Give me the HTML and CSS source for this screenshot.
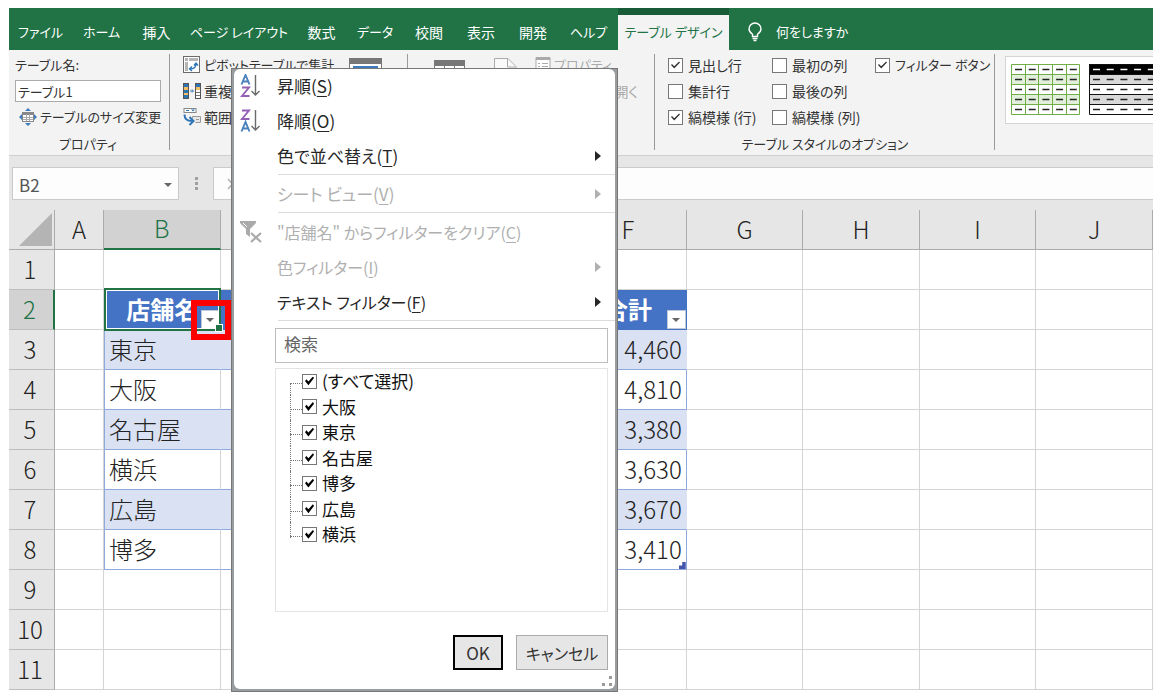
FILE: index.html
```html
<!DOCTYPE html>
<html lang="ja">
<head>
<meta charset="utf-8">
<title>テーブル デザイン</title>
<link rel="stylesheet" href="styles.css">
</head>
<body>
<div class="app">
  <nav class="tabs">
    <div class="tab-list">
      <button class="tab kana">ファイル</button>
      <button class="tab kana">ホーム</button>
      <button class="tab">挿入</button>
      <button class="tab kana">ページ レイアウト</button>
      <button class="tab">数式</button>
      <button class="tab kana">データ</button>
      <button class="tab">校閲</button>
      <button class="tab">表示</button>
      <button class="tab">開発</button>
      <button class="tab kana">ヘルプ</button>
      <button class="tab kana tab-active">テーブル デザイン</button>
    </div>
    <button class="tell-me kana">
      <svg width="16" height="20" viewBox="0 0 16 20" fill="none" stroke="#fff" stroke-width="1.4"><path d="M5.5 14.5v-2.2C3.5 10.800 2 9.200 2 6.900a6 5.900 0 0 1 12 0c0 2.300-1.500 3.900-3.500 5.400v2.200z"/><path d="M5.500 16.500h5M6.500 18.500h3"/></svg>
      <span>何をしますか</span>
    </button>
  </nav>

  <section class="ribbon">
    <div class="group group-props">
      <div class="rows">
        <label class="row kana" for="tname">テーブル名:</label>
        <div class="row kana"><input class="table-name" id="tname" type="text" value="テーブル1"></div>
        <button class="row tool kana tool-indent">
          <svg width="18" height="18" viewBox="0 0 18 18"><path d="M9 0l3 3H6zM9 18l3-3H6zM0 9l3-3v6zM18 9l-3-3v6z" fill="#3f7cbf"/><rect x="3.500" y="4.500" width="11" height="9" fill="#fff" stroke="#888"/><path d="M4 5h10v2H4z" fill="#888"/><path d="M4 9.500h10M4 11.500h10M7.500 6v7M10.500 6v7" stroke="#aaa"/></svg>
          <span>テーブルのサイズ変更</span>
        </button>
      </div>
      <div class="group-label kana">プロパティ</div>
    </div>
    <div class="group group-tools">
      <div class="rows">
        <button class="row tool kana">
          <svg width="18" height="18" viewBox="0 0 18 18"><rect x=".5" y=".5" width="16" height="16" fill="#fff" stroke="#6b6b6b"/><path d="M2 2h3v3H2zM6 2h9v3H6zM2 6h3v9H2z" fill="#b5b5b5"/><path d="M7 13c4 0 6-2 6-5M11 9.500L13 7l2 2.500M9 10.500L6.500 13 9 15" fill="none" stroke="#2e75b6" stroke-width="1.400"/></svg>
          <span>ピボットテーブルで集計</span>
        </button>
        <button class="row tool">
          <svg width="18" height="16" viewBox="0 0 18 16"><rect x=".5" y=".5" width="5" height="15" fill="#2e75b6" stroke="#555"/><path d="M1 4h4v3H1zM1 10h4v2H1z" fill="#f2c063"/><path d="M7 8h3M9 6.500L10.500 8 9 9.500" stroke="#2e75b6" fill="none"/><rect x="12.500" y=".5" width="5" height="15" fill="#fff" stroke="#555"/><path d="M13 1h4v3h-4z" fill="#2e75b6"/><path d="M13 4h4v3h-4z" fill="#f2c063"/><path d="M13 9.500h4M13 12.500h4" stroke="#777"/></svg>
          <span>重複</span>
        </button>
        <button class="row tool">
          <svg width="18" height="18" viewBox="0 0 18 18"><rect x="1" y=".5" width="12" height="4" fill="#fff" stroke="#888"/><path d="M3 2.500h3" stroke="#2e75b6"/><path d="M8 1.500h4l-2 2z" fill="#2e75b6"/><path d="M9.500 10.500v-2h8v6h-5" fill="#e8e8e8" stroke="#999"/><path d="M13 11.500h3" stroke="#999"/><path d="M1.500 6.500c0 4 2 6.500 7.500 6.500M6.500 9l4 4-4 4" fill="none" stroke="#2e75b6" stroke-width="2"/></svg>
          <span>範囲</span>
        </button>
      </div>
      <svg class="big-icon" width="34" height="32" viewBox="0 0 34 32"><rect x=".5" y=".5" width="32" height="30" fill="#fff" stroke="#777"/><path d="M0 0h33v6H0z" fill="#777"/><path d="M4 8h25v10H4z" fill="#3f7cbf"/></svg>
    </div>
    <div class="group group-ext">
      <svg class="big-icon" width="32" height="32" viewBox="0 0 32 32"><rect x=".5" y="2.500" width="30" height="28" fill="#fff" stroke="#777"/><path d="M0 2h31v6H0z" fill="#777"/><path d="M10.500 8v22M20.500 8v22" stroke="#777"/></svg>
      <svg class="big-icon" width="24" height="32" viewBox="0 0 24 32" fill="#f9f9f9" stroke="#aaa"><path d="M.5 30V.5H14l8 8V30z"/><path d="M13.500 1v8h8"/></svg>
      <div class="rows ext-rows">
        <button class="row tool kana" disabled>
          <svg width="16" height="16" viewBox="0 0 16 16"><rect x="1" y="1" width="14" height="14" fill="#fff" stroke="#aaa"/><path d="M1 0h14v3H1z" fill="#aaa"/><path d="M3 6.500h2M7 6.500h6M3 9.500h2M7 9.500h6M3 12.500h2M7 12.500h6" stroke="#aaa"/></svg>
          <span>プロパティ</span>
        </button>
        <button class="row tool row-end" disabled>開く</button>
      </div>
    </div>
    <div class="group group-style">
      <div class="checks">
        <label class="row check"><input type="checkbox" checked>見出し行</label>
        <label class="row check"><input type="checkbox">最初の列</label>
        <label class="row check kana"><input type="checkbox" checked>フィルター ボタン</label>
        <label class="row check"><input type="checkbox">集計行</label>
        <label class="row check"><input type="checkbox">最後の列</label>
        <span></span>
        <label class="row check"><input type="checkbox" checked>縞模様 (行)</label>
        <label class="row check"><input type="checkbox">縞模様 (列)</label>
      </div>
      <div class="group-label kana">テーブル スタイルのオプション</div>
    </div>
    <div class="gallery">
      <svg width="70" height="52" viewBox="0 0 70 52"><path d="M0 0h69v51H0z" fill="#fff"/><path d="M0 10.500h69v10H0zM0 30.500h69v10H0z" fill="#e2efda"/><path d="M.5.5h68v50H.5zM0 10.500h69M0 20.500h69M0 30.500h69M0 40.500h69M14.500 0v51M27.500 0v51M41.500 0v51M55.500 0v51" fill="none" stroke="#70ad47"/><path d="M4 5.500h62M4 15.500h62M4 25.500h62M4 35.500h62M4 45.500h62" stroke="#222" stroke-width="1.400" stroke-dasharray="7 6.700"/></svg>
      <svg width="70" height="52" viewBox="0 0 70 52"><path d="M0 0h69v51H0z" fill="#fff"/><path d="M0 10.500h69v10H0zM0 30.500h69v10H0z" fill="#d9d9d9"/><path d="M0 0h69v10H0z"/><path d="M.5.5h68v50H.5zM0 10.500h69M0 20.500h69M0 30.500h69M0 40.500h69" fill="none" stroke="#111"/><path d="M4 5.500h62" stroke="#fff" stroke-width="1.400" stroke-dasharray="7 6.700"/><path d="M4 15.500h62M4 25.500h62M4 35.500h62M4 45.500h62" stroke="#222" stroke-width="1.400" stroke-dasharray="7 6.700"/></svg>
    </div>
  </section>

  <div class="formula-bar">
    <button class="name-box"><span>B2</span><i class="caret"></i></button>
    <span class="dots"><i></i><i></i><i></i></span>
    <div class="fx-box"><svg width="12" height="12" viewBox="0 0 12 12"><path d="M1 1l9 10M10 1L1 11" stroke="#b0b0b0" stroke-width="1.500"/></svg></div>
  </div>

  <table class="sheet">
    <colgroup><col class="col-num"><col class="col-a"><col><col><col><col><col><col><col><col><col></colgroup>
    <thead>
      <tr><th class="corner"><svg width="33" height="33" viewBox="0 0 33 33"><path d="M33 0v33H0z" fill="#b4b4b4"/></svg></th><th>A</th><th class="on">B</th><th></th><th></th><th></th><th>F</th><th>G</th><th>H</th><th>I</th><th>J</th></tr>
    </thead>
    <tbody>
      <tr><th>1</th><td></td><td></td><td></td><td></td><td></td><td></td><td></td><td></td><td></td><td></td></tr>
      <tr class="head"><th class="on">2</th><td></td><td class="t first active">店舗名<button class="filter" aria-label="フィルター"><i class="caret"></i></button><span class="selection"></span><span class="marker"></span></td><td class="t"></td><td class="t"></td><td class="t"></td><td class="t last">合計<button class="filter" aria-label="フィルター"><i class="caret"></i></button></td><td></td><td></td><td></td><td></td></tr>
      <tr class="band"><th>3</th><td></td><td class="t first">東京</td><td class="t"></td><td class="t"></td><td class="t"></td><td class="t last">4,460</td><td></td><td></td><td></td><td></td></tr>
      <tr><th>4</th><td></td><td class="t first">大阪</td><td class="t"></td><td class="t"></td><td class="t"></td><td class="t last">4,810</td><td></td><td></td><td></td><td></td></tr>
      <tr class="band"><th>5</th><td></td><td class="t first">名古屋</td><td class="t"></td><td class="t"></td><td class="t"></td><td class="t last">3,380</td><td></td><td></td><td></td><td></td></tr>
      <tr><th>6</th><td></td><td class="t first">横浜</td><td class="t"></td><td class="t"></td><td class="t"></td><td class="t last">3,630</td><td></td><td></td><td></td><td></td></tr>
      <tr class="band"><th>7</th><td></td><td class="t first">広島</td><td class="t"></td><td class="t"></td><td class="t"></td><td class="t last">3,670</td><td></td><td></td><td></td><td></td></tr>
      <tr><th>8</th><td></td><td class="t first">博多</td><td class="t"></td><td class="t"></td><td class="t"></td><td class="t last">3,410<span class="resize"></span></td><td></td><td></td><td></td><td></td></tr>
      <tr><th>9</th><td></td><td></td><td></td><td></td><td></td><td></td><td></td><td></td><td></td><td></td></tr>
      <tr><th>10</th><td></td><td></td><td></td><td></td><td></td><td></td><td></td><td></td><td></td><td></td></tr>
      <tr><th>11</th><td></td><td></td><td></td><td></td><td></td><td></td><td></td><td></td><td></td><td></td></tr>
    </tbody>
  </table>
</div>

<div class="popup">
  <div class="popup-body">
    <button class="item"><svg width="22" height="24" viewBox="0 0 22 24" fill="none" stroke-width="1.900"><path d="M1.500 10.500L5.500 1l4 9.500M3 7.500h5" stroke="#4a80bd"/><path d="M2 13.500h7L2 22h7.500" stroke="#9460b4"/><path d="M15.500 1v20M11.500 17l4 4 4-4" stroke="#6a6a6a" stroke-width="1.400"/></svg><span>昇順(<u>S</u>)</span></button>
    <button class="item"><svg width="22" height="24" viewBox="0 0 22 24" fill="none" stroke-width="1.900"><path d="M2 1.500h7L2 10h7.500" stroke="#9460b4"/><path d="M1.500 22.500l4-9.500 4 9.500M3 19.500h5" stroke="#4a80bd"/><path d="M15.500 1v20M11.500 17l4 4 4-4" stroke="#6a6a6a" stroke-width="1.400"/></svg><span>降順(<u>O</u>)</span></button>
    <button class="item"><span class="label">色で並べ替え(<u>T</u>)</span><i class="arrow"></i></button>
    <hr>
    <button class="item" disabled><span class="label">シート ビュー(<u>V</u>)</span><i class="arrow"></i></button>
    <hr>
    <button class="item item-kana" disabled><svg width="22" height="24" viewBox="0 0 22 24"><path d="M0 1h16v2l-6 6v8l-4-3V9L0 3z" fill="#aaa"/><path d="M3 3l4 4" stroke="#fff"/><path d="M11 13l10 9M21 13l-10 9" stroke="#aaa" stroke-width="2.200"/></svg><span>"店舗名" からフィルターをクリア(<u>C</u>)</span></button>
    <button class="item item-kana" disabled><span class="label">色フィルター(<u>I</u>)</span><i class="arrow"></i></button>
    <button class="item item-kana"><span class="label">テキスト フィルター(<u>F</u>)</span><i class="arrow"></i></button>
    <hr>
    <input class="search" type="text" placeholder="検索" aria-label="検索">
    <div class="list">
      <ul class="tree">
        <li><label><input type="checkbox" checked>(すべて選択)</label></li>
        <li><label><input type="checkbox" checked>大阪</label></li>
        <li><label><input type="checkbox" checked>東京</label></li>
        <li><label><input type="checkbox" checked>名古屋</label></li>
        <li><label><input type="checkbox" checked>博多</label></li>
        <li><label><input type="checkbox" checked>広島</label></li>
        <li><label><input type="checkbox" checked>横浜</label></li>
      </ul>
    </div>
    <div class="actions">
      <button class="ok">OK</button>
      <button class="cancel item-kana">キャンセル</button>
    </div>
    <svg class="grip" width="12" height="12" viewBox="0 0 12 12"><path d="M8 1h3v3H8zM1 8h3v3H1zM8 8h3v3H8z" fill="#9a9a9a"/></svg>
  </div>
</div>
</body>
</html>
```
FILE: styles.css
```css
* { box-sizing: border-box; }

body {
  margin: 0;
  padding: 8px 9px;
  background: #fff;
  color: #333;
  font-family: "Noto Sans CJK JP", sans-serif;
  font-size: 14px;
  line-height: 20px;
  font-feature-settings: "palt";
}

button, input {
  margin: 0;
  padding: 0;
  border: 0;
  background: none;
  color: inherit;
  font: inherit;
  font-feature-settings: inherit;
  white-space: nowrap;
}

svg { flex: none; display: block; }

.kana { font-size: 13px; }

/* Tabs */
.tabs {
  display: flex;
  height: 42px;
  background: #217346;
  color: #fff;
}
.tab-list {
  display: grid;
  grid-template-columns: 63px 59px 51px 114px 51px 56px 52px 52px 52px 59px 111px;
}
.tab { padding-top: 5px; }
.tab-active {
  padding-top: 0;
  padding-bottom: 2px;
  border-top: 7px solid #185c37;
  background: #f3f3f3;
  color: #217346;
}
.tell-me {
  display: flex;
  align-items: center;
  gap: 13px;
  padding: 5px 0 0 18px;
}

/* Ribbon */
.ribbon {
  display: flex;
  height: 106px;
  padding-top: 2px;
  overflow: hidden;
  border-bottom: 1px solid #d0d0d0;
  background: #f3f3f3;
}
.group {
  display: flex;
  flex: none;
  position: relative;
}
.group::after {
  content: "";
  position: absolute;
  top: 2px;
  right: 0;
  width: 1px;
  height: 96px;
  background: #9a9a9a;
}
.row {
  display: flex;
  align-items: center;
  height: 26px;
  white-space: nowrap;
}
.row-end { justify-content: flex-end; }
.tool { gap: 3px; }
.tool:disabled { color: #aaa; }
.group-label {
  padding-top: 4px;
  text-align: center;
}
.group-props {
  flex-direction: column;
  width: 161px;
  padding: 0 9px 0 6px;
}
.table-name {
  width: 100%;
  height: 22px;
  padding: 0 2px;
  border: 1px solid #ababab;
  background: #fff;
}
.tool-indent { padding-left: 4px; }
.group-tools {
  gap: 25px;
  width: 238px;
  padding-left: 13px;
}
.group-tools .rows { width: 141px; }
.big-icon { margin-top: 6px; }
.group-ext {
  width: 247px;
  padding-left: 26px;
  gap: 28px;
}
.ext-rows {
  flex: 1;
  margin-right: 17px;
  margin-left: -11px;
}
.ext-rows .row { width: 100%; }
.group-style {
  flex-direction: column;
  width: 340px;
  padding: 0 13px;
}
.checks {
  display: grid;
  grid-template-columns: 104px 103px 1fr;
}
.check { gap: 5px; }
.check input {
  flex: none;
  width: 15px;
  height: 15px;
  appearance: none;
  border: 1px solid #777;
  background: #fff;
}
.check input:checked::before {
  content: "";
  display: block;
  width: 9px;
  height: 9px;
  margin: 2px;
  background: #333;
  clip-path: polygon(0 50%, 11% 38%, 36% 65%, 90% 10%, 100% 22%, 36% 88%);
}
.gallery {
  display: flex;
  flex: none;
  gap: 8px;
  height: 68px;
  margin: 4px 0 0 10px;
  padding: 7px 5px;
  border: 1px solid #d4d4d4;
  background: #fff;
}

/* Formula bar */
.formula-bar {
  display: flex;
  height: 54px;
  padding: 11px 0 10px 3px;
  background: #e6e6e6;
}
.caret {
  width: 0;
  border: 4px solid transparent;
  border-top-color: #666;
  border-bottom: 0;
}
.name-box {
  display: flex;
  align-items: center;
  justify-content: space-between;
  width: 167px;
  padding: 2px 6px 0;
  border: 1px solid #cbcbcb;
  background: #fdfdfd;
  color: #555;
  font-size: 17px;
}
.dots {
  display: grid;
  align-content: center;
  gap: 2px;
  width: 34px;
  justify-items: center;
}
.dots i {
  width: 3px;
  height: 3px;
  background: #a0a0a0;
}
.fx-box {
  display: flex;
  flex: 1;
  align-items: center;
  padding-left: 13px;
  border: 1px solid #cbcbcb;
  border-right: 0;
  background: #fdfdfd;
}

/* Sheet */
.sheet {
  width: 100%;
  table-layout: fixed;
  border-collapse: separate;
  border-spacing: 0;
  color: #222;
  font-size: 24px;
  font-weight: 300;
  line-height: 36px;
}
.col-num { width: 46px; }
.col-a { width: 49px; }
.sheet th, .sheet td {
  position: relative;
  height: 40px;
  padding: 0 0 2px;
  border-right: 1px solid #d4d4d4;
  border-bottom: 1px solid #d4d4d4;
}
.sheet th {
  border-color: #ababab;
  background: #e6e6e6;
  font-weight: 300;
}
.sheet tbody th { border-bottom-color: #bdbdbd; padding-right: 3px; }
.sheet .corner svg { margin: 2px 3px 0 10px; }
.sheet .on {
  background: #d2d2d2;
  color: #217346;
}
.sheet thead .on { border-bottom: 2px solid #217346; }
.sheet tbody .on { border-right: 2px solid #217346; }
.sheet .t { border-bottom-color: #8ea9db; }
.sheet .first { padding-left: 4px; border-left: 1px solid #8ea9db; }
.sheet .last { padding-right: 4px; border-right-color: #8ea9db; text-align: right; }
.sheet .band .t { border-right-color: #d9e1f2; background: #d9e1f2; }
.sheet .head .t {
  padding: 0 0 2px;
  border-color: #4472c4;
  background: #4472c4;
  color: #fff;
  font-weight: 700;
  text-align: center;
}
.sheet .active { z-index: 1; }
.filter {
  display: flex;
  align-items: center;
  justify-content: center;
  position: absolute;
  right: 0;
  bottom: 0;
  width: 19px;
  height: 19px;
  border: 1px solid #c0c8d8;
  background: #fff;
}
.selection {
  position: absolute;
  inset: -2px -1px;
  border: 2px solid #217346;
  box-shadow: inset 0 0 0 1px #fff;
}
.selection::after {
  content: "";
  position: absolute;
  right: -4px;
  bottom: -3px;
  width: 6px;
  height: 6px;
  border: 1px solid #fff;
  background: #217346;
}
.marker {
  position: absolute;
  right: -11px;
  bottom: -11px;
  width: 40px;
  height: 40px;
  border: 6px solid #f00;
}
.resize {
  position: absolute;
  right: 0;
  bottom: 0;
  width: 7px;
  height: 7px;
  background: #4455aa;
  clip-path: polygon(50% 0, 100% 0, 100% 100%, 0 100%, 0 50%, 50% 50%);
}

/* Filter popup */
.popup {
  position: absolute;
  z-index: 2;
  top: 68px;
  left: 231px;
  width: 387px;
  border: 1px solid #777;
  background: #9a9da0;
  color: #262626;
  font-size: 17px;
  line-height: 24px;
}
.popup-body {
  position: relative;
  margin: 0 2px 2px;
  padding: 0 0 19px;
  border-radius: 6px;
  background: #fff;
}
.item {
  display: flex;
  align-items: center;
  gap: 15px;
  width: 100%;
  height: 35px;
  padding: 0 14px 2px 6px;
}
.item-kana { font-size: 16px; }
.item:disabled { color: #b0b0b0; }
.item u { text-underline-offset: 3px; }
.label {
  flex: 1;
  padding-left: 37px;
  text-align: left;
}
.arrow {
  height: 0;
  border: 5px solid transparent;
  border-right: 0;
  border-left: 6px solid currentColor;
}
.popup hr {
  height: 1px;
  margin: 0 0 2px 44px;
  border: 0;
  background: #dcdcdc;
}
.search {
  display: block;
  width: 333px;
  height: 35px;
  margin: 7px 0 5px 41px;
  padding: 0 8px 4px;
  border: 1px solid #bdbdbd;
}
.search::placeholder { color: #666; opacity: 1; }
.list {
  width: 333px;
  height: 244px;
  margin-left: 41px;
  border: 1px solid #e4e4e4;
  color: #111;
}
.tree {
  display: grid;
  grid-auto-rows: 1fr;
  height: 179px;
  margin: 0;
  padding: 0 0 0 14px;
  list-style: none;
}
.tree li {
  position: relative;
  padding-left: 12px;
}
.tree li::before {
  content: "";
  position: absolute;
  inset: 0 auto 0 0;
  width: 10px;
  border-left: 1px dotted #777;
}
.tree li::after {
  content: "";
  position: absolute;
  top: 14px;
  left: 0;
  width: 12px;
  border-top: 1px dotted #777;
}
.tree li:first-child::before { top: 14px; }
.tree li:last-child::before { bottom: 10px; }
.tree label {
  display: flex;
  align-items: center;
  gap: 5px;
}
.tree input {
  width: 15px;
  height: 15px;
  appearance: none;
  border: 1px solid #777;
  background: #fff;
}
.tree input::before {
  content: "";
  display: block;
  width: 9px;
  height: 9px;
  margin: 2px;
  background: #000;
  clip-path: polygon(0 50%, 16% 30%, 38% 55%, 88% 0, 100% 18%, 38% 98%);
}
.actions {
  display: flex;
  justify-content: flex-end;
  gap: 13px;
  padding: 23px 7px 0 0;
  color: #333;
}
.actions button {
  height: 35px;
  border: 1px solid #ababab;
  background: #e6e6e6;
}
.actions .ok {
  width: 50px;
  border: 2px solid #000;
}
.cancel { width: 92px; }
.grip {
  position: absolute;
  right: 2px;
  bottom: 2px;
}
```
